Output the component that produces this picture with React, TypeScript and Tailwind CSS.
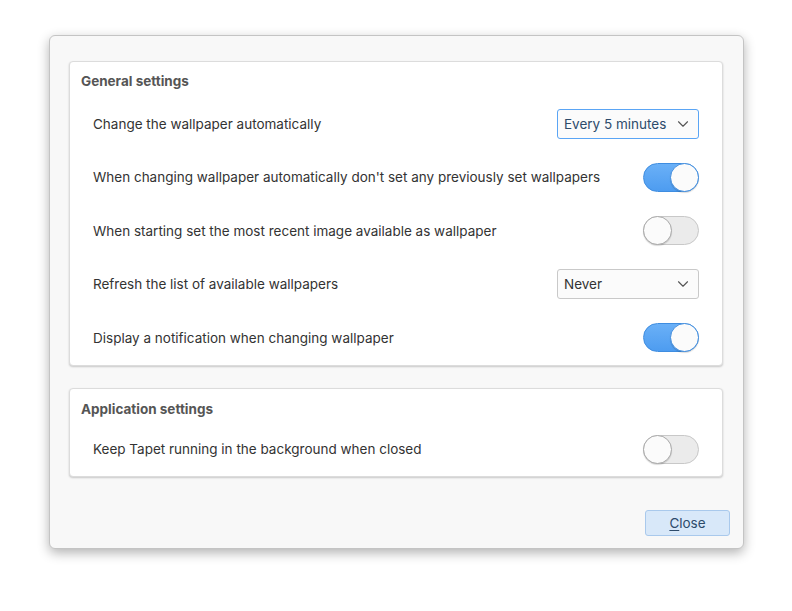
import { ChevronDown } from "lucide-react";

function Toggle({ on }: { on: boolean }) {
    return (
        <div
            className={
                "relative w-[56px] h-[29px] rounded-full border " +
                (on
                    ? "bg-gradient-to-b from-[#6ab0f7] to-[#4d9cf0] border-[#3f8de0]"
                    : "bg-[#ebebeb] border-[#c8c8c8]")
            }
        >
            <div
                className={
                    "absolute top-[-1px] w-[29px] h-[29px] rounded-full bg-[#fbfbfb] border shadow-[0_1px_1px_rgba(0,0,0,0.15)] " +
                    (on ? "right-[-1px] border-[#3f8de0]" : "left-[-1px] border-[#a9a9a9]")
                }
            />
        </div>
    );
}

function Select({ value, focused }: { value: string; focused?: boolean }) {
    return (
        <div
            className={
                "w-[142px] h-[30px] rounded-[3px] border bg-[#fbfbfb] flex items-center justify-between pl-[6px] pr-[6px] " +
                (focused ? "border-[#5aa5f5] text-[#2d4b6b]" : "border-[#c9c9c9] text-[#333]")
            }
        >
            <span className="text-[13.5px]">{value}</span>
            <ChevronDown size={18} strokeWidth={1.5} className="text-[#555]" />
        </div>
    );
}

function Row({ label, children }: { label: string; children: React.ReactNode }) {
    return (
        <div className="h-[53.5px] flex items-center justify-between pl-[23px] pr-[23px]">
            <span className="text-[13.5px] text-[#333]">{label}</span>
            {children}
        </div>
    );
}

export default function App() {
    return (
        <div className="w-[792px] h-[611px] bg-white pt-[35px] pl-[49px] font-['Inter',sans-serif]">
            <div className="w-[695px] h-[514px] bg-[#f8f8f8] border border-[#c4c4c4] rounded-[6px] shadow-[0_4px_12px_rgba(0,0,0,0.3)] pt-[25px] pl-[19px] pr-[20px] flex flex-col">
                <div className="bg-white border border-[#dcdcdc] rounded-[4px] shadow-[0_1px_2px_rgba(0,0,0,0.2)] pt-[10px]">
                    <div className="pl-[11px] text-[13.5px] leading-[18px] font-bold text-[#555]">General settings</div>
                    <div className="mt-[7px]">
                        <Row label="Change the wallpaper automatically">
                            <Select value="Every 5 minutes" focused />
                        </Row>
                        <Row label="When changing wallpaper automatically don't set any previously set wallpapers">
                            <Toggle on />
                        </Row>
                        <Row label="When starting set the most recent image available as wallpaper">
                            <Toggle on={false} />
                        </Row>
                        <Row label="Refresh the list of available wallpapers">
                            <Select value="Never" />
                        </Row>
                        <Row label="Display a notification when changing wallpaper">
                            <Toggle on />
                        </Row>
                    </div>
                </div>
                <div className="mt-[22px] bg-white border border-[#dcdcdc] rounded-[4px] shadow-[0_1px_2px_rgba(0,0,0,0.2)] pt-[11px]">
                    <div className="pl-[11px] text-[13.5px] leading-[18px] font-bold text-[#555]">Application settings</div>
                    <div className="mt-[5px]">
                        <Row label="Keep Tapet running in the background when closed">
                            <Toggle on={false} />
                        </Row>
                    </div>
                </div>
                <div className="mt-auto mb-[12px] flex justify-end mr-[-7px]">
                    <button className="w-[85px] h-[26px] rounded-[3px] bg-[#d8e8f9] border border-[#a9c9ec] text-[13.5px] text-[#2d4b6b]">
                        <span className="underline underline-offset-2">C</span>lose
                    </button>
                </div>
            </div>
        </div>
    );
}
